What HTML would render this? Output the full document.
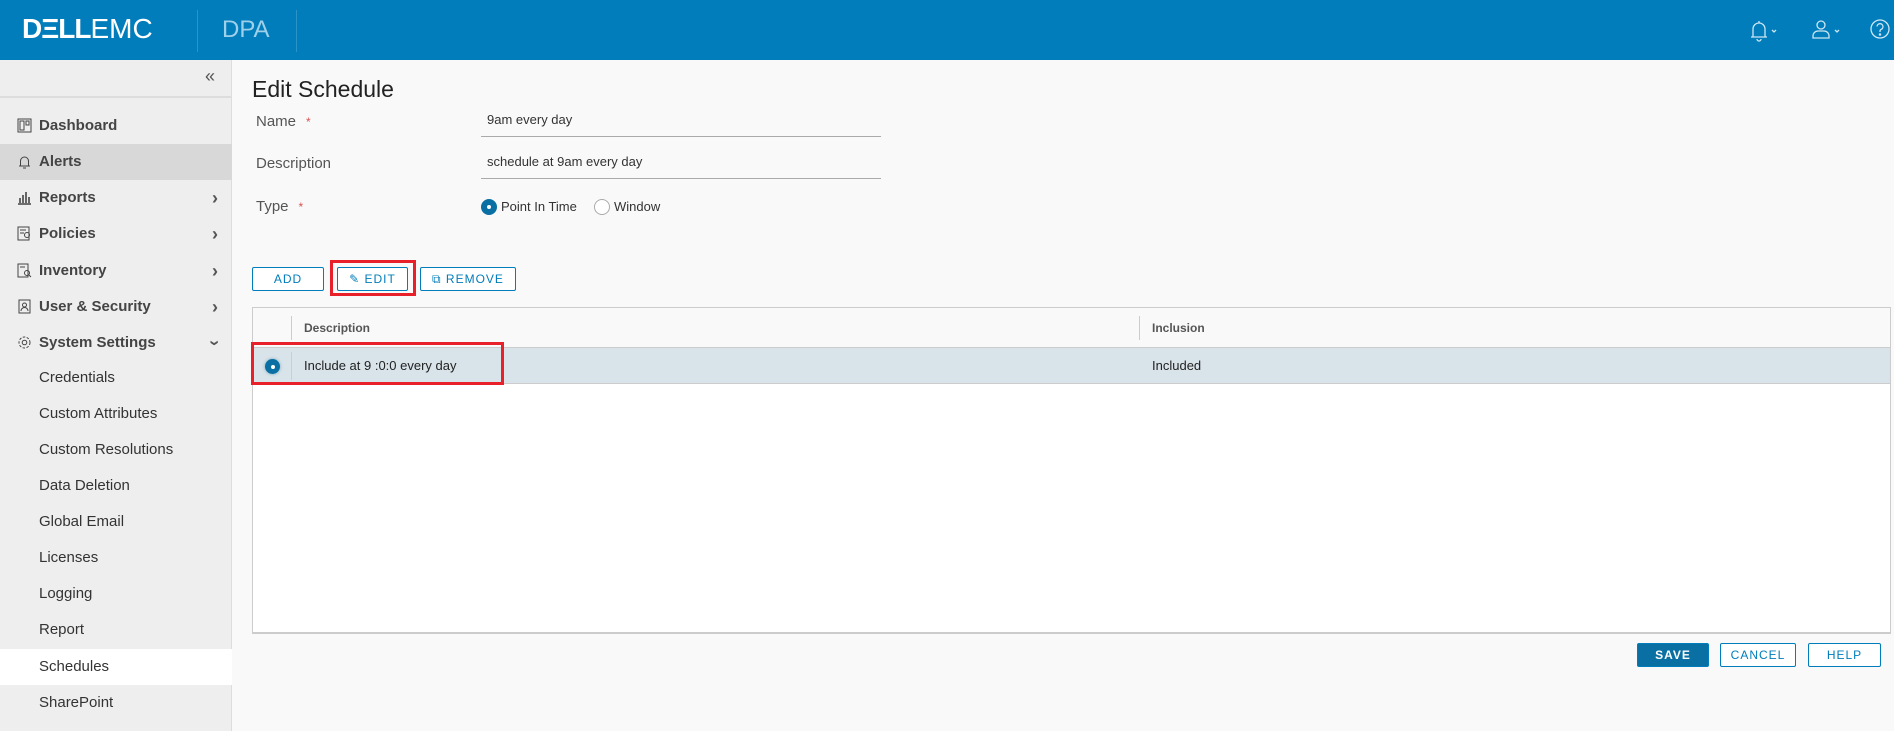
<!DOCTYPE html>
<html><head><meta charset="utf-8"><style>
*{box-sizing:border-box;margin:0;padding:0}
body{width:1894px;height:731px;overflow:hidden;background:#f9f9f9;font-family:"Liberation Sans",sans-serif;position:relative;color:#333}
.abs{position:absolute}
#hdr{left:0;top:0;width:1894px;height:60px;background:#007dba}
#side{left:0;top:60px;width:232px;height:671px;background:#eeeeee;border-right:1px solid #ddd}
.mi{position:absolute;left:0;width:232px;height:36px;font-size:15px;color:#333;line-height:36px;padding-left:39px}
.mi.b{font-weight:bold;color:#444}
.ic{position:absolute;left:17px;top:10px;width:15px;height:15px}
.chev{position:absolute;right:14px;top:0;font-size:18px;color:#555}
.lbl{font-size:15px;color:#555}
.star{color:#d9534f;margin-left:10px;font-size:12px}
.inp{border-bottom:1px solid #aaa;font-size:13px;color:#333;padding-left:6px}
.btn{border:1px solid #007dba;background:#fff;color:#007dba;font-size:12px;letter-spacing:1px;text-align:center;line-height:22px;border-radius:2px}
.red{border:3px solid #e8202a}
</style></head><body>
<div id="hdr" class="abs">
<div class="abs" style="left:22px;top:13px;color:#fff;font-size:28px;font-weight:bold;letter-spacing:-1px">DΞLL<span style="font-weight:normal;letter-spacing:0">EMC</span></div>
<div class="abs" style="left:197px;top:10px;width:1px;height:42px;background:#2a93c8"></div>
<div class="abs" style="left:222px;top:16px;color:#9fd0ea;font-size:24px">DPA</div>
<div class="abs" style="left:296px;top:10px;width:1px;height:42px;background:#2a93c8"></div>
<svg class="abs" style="left:1748px;top:18px" width="34" height="24" fill="none" stroke="#cde6f4" stroke-width="1.3"><path d="M3 19h16M5 19V11a6 6 0 0 1 12 0v8M9 21a2 2 0 0 0 4 0M11 3v2"/><path d="M24 12l2 2 2-2"/></svg>
<svg class="abs" style="left:1810px;top:18px" width="34" height="24" fill="none" stroke="#cde6f4" stroke-width="1.3"><circle cx="11" cy="7" r="4"/><path d="M3 20v-2a5 5 0 0 1 5-5h6a5 5 0 0 1 5 5v2z"/><path d="M25 12l2 2 2-2"/></svg>
<svg class="abs" style="left:1869px;top:18px" width="24" height="24" fill="none" stroke="#cde6f4" stroke-width="1.3"><circle cx="11" cy="11" r="9"/><path d="M8 8.5a3 3 0 1 1 4 3c-1 .5-1 1-1 2.5"/><circle cx="11" cy="16.5" r=".6" fill="#cde6f4"/></svg>
</div>
<div id="side" class="abs">
<div class="abs" style="left:205px;top:6px;font-size:18px;color:#555">«</div>
<div class="abs" style="left:0;top:36px;width:232px;height:2px;background:#ddd"></div>
<div class="mi b" style="top:48px"><svg class="ic" viewBox="0 0 15 15" fill="none" stroke="#444"><rect x="1" y="1" width="13" height="13"/><rect x="3" y="3" width="4" height="9"/><rect x="9" y="3" width="3" height="4"/></svg>Dashboard</div>
<div class="mi b" style="top:84px;background:#d8d8d8"><svg class="ic" viewBox="0 0 15 15" fill="none" stroke="#444"><path d="M2 12h11M3.5 12V7a4 4 0 0 1 8 0v5M6 14h3"/></svg>Alerts</div>
<div class="mi b" style="top:120px"><svg class="ic" viewBox="0 0 15 15" fill="none" stroke="#444" stroke-width="1.6"><path d="M1 14h13M3 13V8M6 13V5M9 13V2M12 13V7"/></svg>Reports<span class="chev">›</span></div>
<div class="mi b" style="top:156px"><svg class="ic" viewBox="0 0 15 15" fill="none" stroke="#444"><rect x="1" y="1" width="11" height="13"/><circle cx="10" cy="9" r="2.5"/><path d="M3 4h6M3 7h4"/></svg>Policies<span class="chev">›</span></div>
<div class="mi b" style="top:193px"><svg class="ic" viewBox="0 0 15 15" fill="none" stroke="#444"><rect x="1" y="1" width="10" height="13"/><circle cx="10" cy="10" r="2.5"/><path d="M12 12l2 2M3 4h5"/></svg>Inventory<span class="chev">›</span></div>
<div class="mi b" style="top:229px"><svg class="ic" viewBox="0 0 15 15" fill="none" stroke="#444"><rect x="2" y="1" width="11" height="13"/><circle cx="7.5" cy="6" r="2"/><path d="M4 12a3.5 3.5 0 0 1 7 0"/></svg>User &amp; Security<span class="chev">›</span></div>
<div class="mi b" style="top:265px"><svg class="ic" viewBox="0 0 15 15" fill="none" stroke="#444"><circle cx="7.5" cy="7.5" r="2.3"/><circle cx="7.5" cy="7.5" r="5.5" stroke-dasharray="2.5 1.5"/></svg>System Settings<span class="chev" style="transform:rotate(90deg)">›</span></div>
<div class="mi" style="top:300px">Credentials</div>
<div class="mi" style="top:336px">Custom Attributes</div>
<div class="mi" style="top:372px">Custom Resolutions</div>
<div class="mi" style="top:408px">Data Deletion</div>
<div class="mi" style="top:444px">Global Email</div>
<div class="mi" style="top:480px">Licenses</div>
<div class="mi" style="top:516px">Logging</div>
<div class="mi" style="top:552px">Report</div>
<div class="mi" style="top:589px;background:#fff">Schedules</div>
<div class="mi" style="top:625px">SharePoint</div>
</div>
<div class="abs" style="left:252px;top:76px;font-size:23px;color:#222">Edit Schedule</div>
<div class="abs lbl" style="left:256px;top:113px">Name<span class="star">*</span></div>
<div class="abs lbl" style="left:256px;top:155px">Description</div>
<div class="abs lbl" style="left:256px;top:198px">Type<span class="star">*</span></div>
<div class="abs inp" style="left:481px;top:112px;width:400px;height:25px">9am every day</div>
<div class="abs inp" style="left:481px;top:154px;width:400px;height:25px">schedule at 9am every day</div>
<div class="abs" style="left:481px;top:199px;width:16px;height:16px;border-radius:50%;background:#0a6fa3"><div style="margin:6px;width:4px;height:4px;border-radius:50%;background:#fff"></div></div>
<div class="abs" style="left:501px;top:199px;font-size:13px">Point In Time</div>
<div class="abs" style="left:594px;top:199px;width:16px;height:16px;border-radius:50%;border:1px solid #aaa;background:#fff"></div>
<div class="abs" style="left:614px;top:199px;font-size:13px">Window</div>
<div class="abs btn" style="left:252px;top:267px;width:72px;height:24px">ADD</div>
<div class="abs red" style="left:330px;top:260px;width:86px;height:36px"></div>
<div class="abs btn" style="left:337px;top:267px;width:71px;height:24px">✎ EDIT</div>
<div class="abs btn" style="left:420px;top:267px;width:96px;height:24px">⧉ REMOVE</div>
<div class="abs" style="left:252px;top:307px;width:1639px;height:327px;background:#fff;border:1px solid #ccc;border-bottom:2px solid #ccc">
<div class="abs" style="left:0;top:0;width:100%;height:40px;background:#f9f9f9;border-bottom:1px solid #ccc"></div>
<div class="abs" style="left:38px;top:8px;width:1px;height:24px;background:#ccc"></div>
<div class="abs" style="left:886px;top:8px;width:1px;height:24px;background:#ccc"></div>
<div class="abs" style="left:51px;top:13px;font-size:12px;color:#555;font-weight:bold">Description</div>
<div class="abs" style="left:899px;top:13px;font-size:12px;color:#555;font-weight:bold">Inclusion</div>
<div class="abs" style="left:0;top:40px;width:100%;height:36px;background:#d9e3ea;border-bottom:1px solid #ccc"></div>
<div class="abs" style="left:38px;top:44px;width:1px;height:28px;background:#c5cfd6"></div>
<div class="abs" style="left:12px;top:51px;width:15px;height:15px;border-radius:50%;background:#0a6fa3;box-shadow:0 0 3px #7ab"><div style="margin:5.5px;width:4px;height:4px;border-radius:50%;background:#fff"></div></div>
<div class="abs" style="left:51px;top:50px;font-size:13px;color:#222">Include at 9 :0:0 every day</div>
<div class="abs" style="left:899px;top:50px;font-size:13px;color:#222">Included</div>
</div>
<div class="abs red" style="left:251px;top:342px;width:253px;height:43px"></div>
<div class="abs btn" style="left:1637px;top:643px;width:72px;height:24px;background:#0a6fa3;color:#fff;font-weight:bold">SAVE</div>
<div class="abs btn" style="left:1720px;top:643px;width:76px;height:24px">CANCEL</div>
<div class="abs btn" style="left:1808px;top:643px;width:73px;height:24px">HELP</div>
</body></html>
